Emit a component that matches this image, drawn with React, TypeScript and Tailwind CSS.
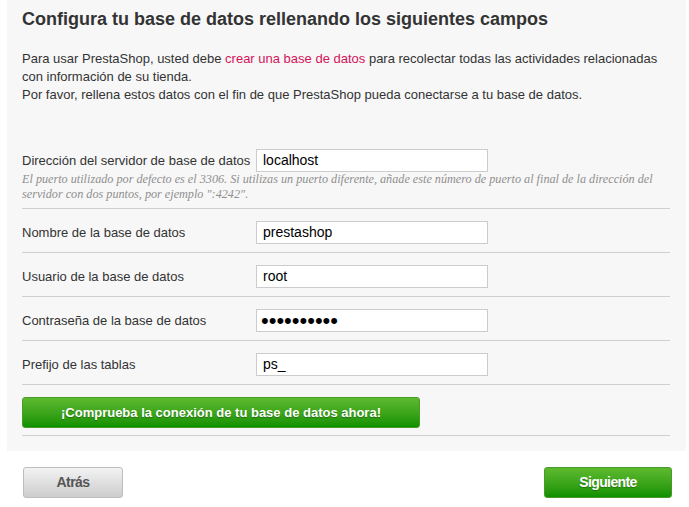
export default function App() {
  const rows = [
    { label: "Nombre de la base de datos", value: "prestashop" },
    { label: "Usuario de la base de datos", value: "root" },
    { label: "Contraseña de la base de datos", value: "••••••••••", password: true },
    { label: "Prefijo de las tablas", value: "ps_" },
  ];

  return (
    <div className="min-h-[507px] w-[689px] bg-white font-['Liberation_Sans',Arial,sans-serif] text-[#333]">
      <div className="ml-[7px] mr-[3px] bg-[#f7f7f7] pl-[15px] pr-[16px] pt-[8px] pb-[15px]">
        <h2 className="text-[18px] leading-[22px] font-bold text-[#333]">
          Configura tu base de datos rellenando los siguientes campos
        </h2>
        <p className="mt-[20px] text-[13px] leading-[18px]">
          Para usar PrestaShop, usted debe <span className="text-[#d3145a]">crear una base de datos</span> para
          recolectar todas las actividades relacionadas con información de su tienda.
          <br />
          Por favor, rellena estos datos con el fin de que PrestaShop pueda conectarse a tu base de datos.
        </p>

        <div className="mt-[45px] border-b border-[#d0d0d0] pb-[6px]">
          <div className="flex items-center">
            <label className="w-[234px] text-[13px]">Dirección del servidor de base de datos</label>
            <div className="flex h-[23px] w-[232px] items-center border border-[#ccc] bg-white px-[6px] text-[14px] text-black">
              localhost
            </div>
          </div>
          <p className="font-['Liberation_Serif',Georgia,serif] text-[12.2px] leading-[15px] text-[#8f8f8f] italic">
            El puerto utilizado por defecto es el 3306. Si utilizas un puerto diferente, añade este número de puerto al final de la dirección del
            servidor con dos puntos, por ejemplo ":4242".
          </p>
        </div>

        {rows.map((r) => (
          <div key={r.label} className="flex items-center border-b border-[#d0d0d0] pt-[12px] pb-[8px]">
            <label className="w-[234px] text-[13px]">{r.label}</label>
            <div
              className={
                r.password
                  ? "flex h-[23px] w-[232px] items-center border border-[#ccc] bg-white px-[4px] text-[22px] leading-none text-black"
                  : "flex h-[23px] w-[232px] items-center border border-[#ccc] bg-white px-[6px] text-[14px] text-black"
              }
            >
              {r.value}
            </div>
          </div>
        ))}

        <div className="border-b border-[#d0d0d0] pt-[12px] pb-[7px]">
          <button className="flex h-[31px] w-[398px] items-center justify-center rounded-[3px] border border-[#4a9a2a] bg-gradient-to-b from-[#5dba2e] to-[#0a9100] text-[13px] font-bold text-white [text-shadow:0_1px_1px_rgba(0,0,0,0.3)]">
            ¡Comprueba la conexión de tu base de datos ahora!
          </button>
        </div>
      </div>

      <div className="mt-[16px] flex justify-between pl-[23px] pr-[17px]">
        <button className="flex h-[31px] w-[100px] items-center justify-center rounded-[3px] border border-[#bdbdbd] bg-gradient-to-b from-[#f2f2f2] to-[#cdcdcd] text-[14px] font-bold tracking-[-0.6px] text-[#555]">
          Atrás
        </button>
        <button className="flex h-[31px] w-[128px] items-center justify-center rounded-[3px] border border-[#4a9a2a] bg-gradient-to-b from-[#5dba2e] to-[#0a9100] text-[14px] font-bold tracking-[-0.6px] text-white [text-shadow:0_1px_1px_rgba(0,0,0,0.3)]">
          Siguiente
        </button>
      </div>
    </div>
  );
}
